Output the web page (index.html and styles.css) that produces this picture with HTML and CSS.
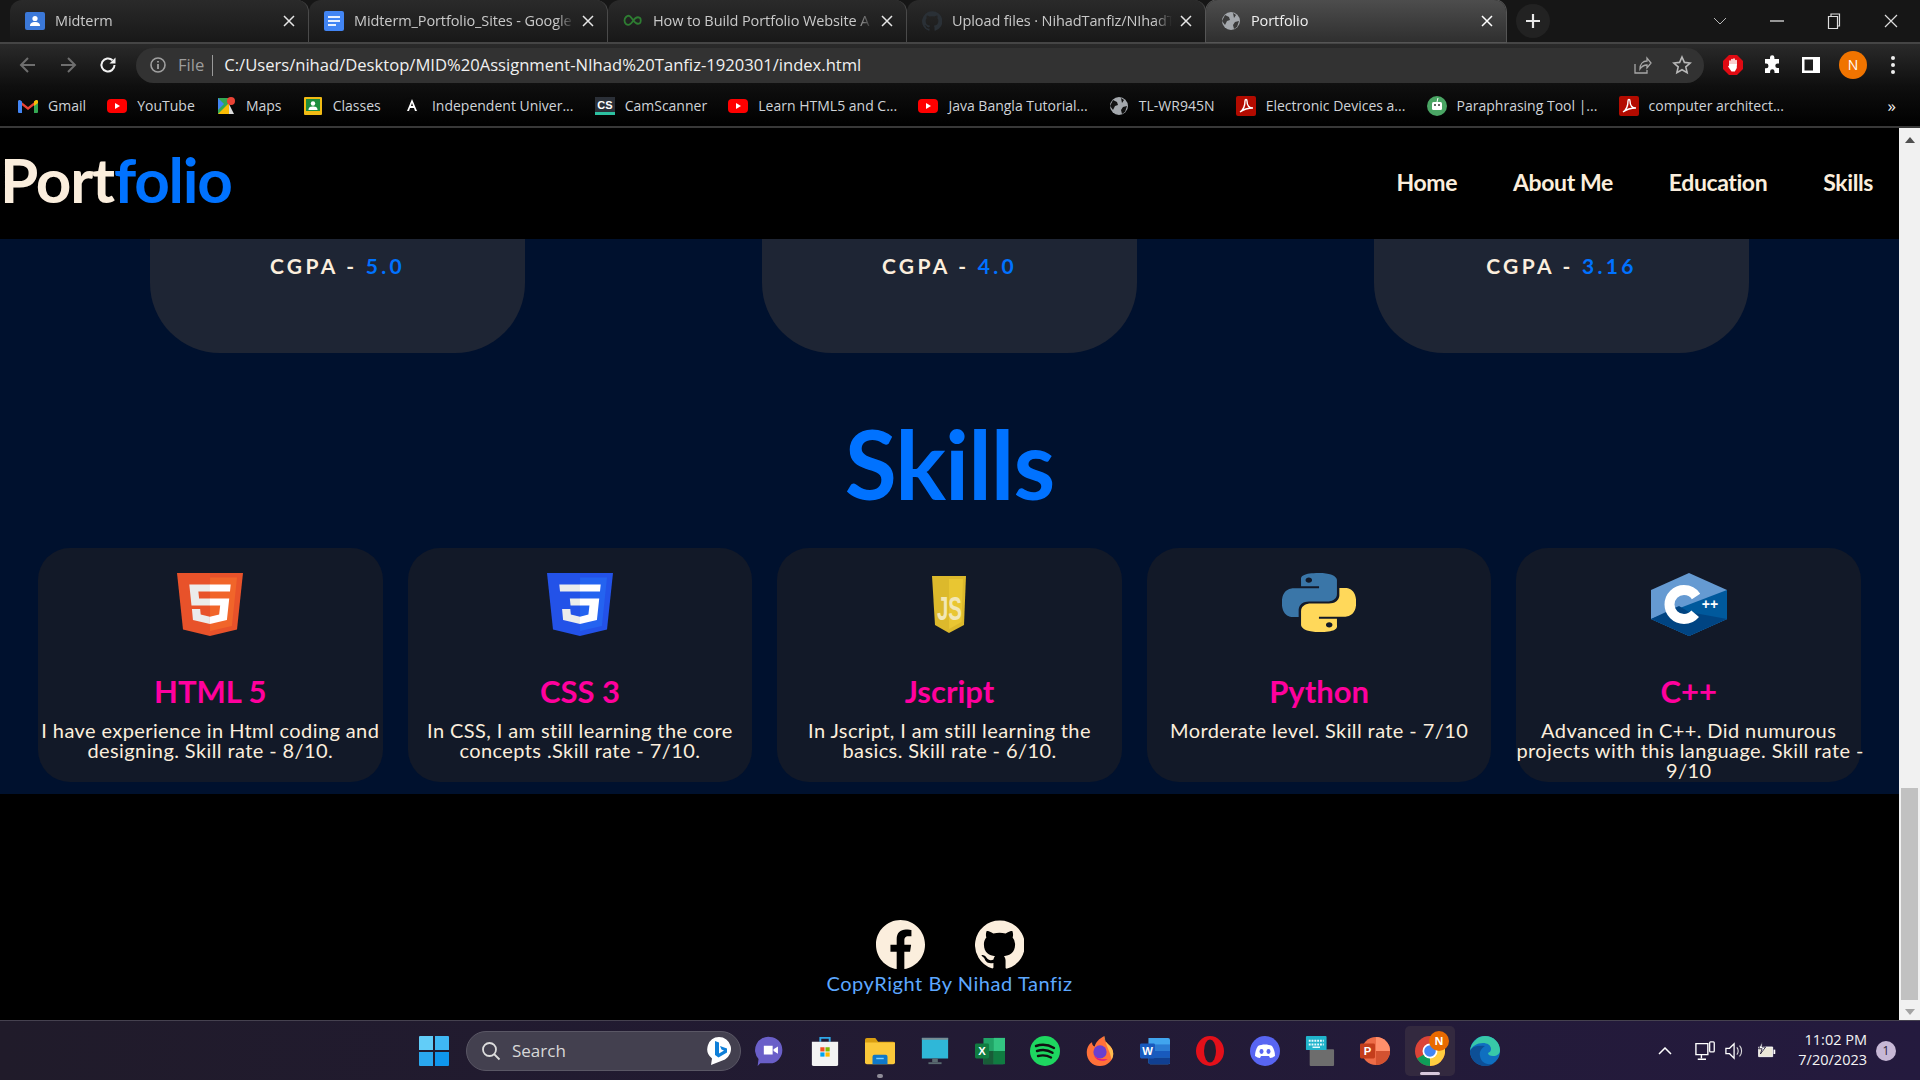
FILE: index.html
```html
<!DOCTYPE html>
<html lang="en">
<head>
<meta charset="utf-8">
<title>Portfolio</title>
<link rel="stylesheet" href="styles.css">
</head>
<body>
<div class="tabstrip">
  <div class="tab">
    <svg class="fav" viewBox="0 0 20 20"><rect x="0" y="1" width="20" height="18" rx="2" fill="#3b78d8"/><circle cx="10" cy="7.500" r="2.600" fill="#fff"/><path d="M5 15c0-3 2-4 5-4s5 1 5 4z" fill="#fff"/></svg>
    <span class="tab-title">Midterm</span><svg class="tab-x" viewBox="0 0 12 12"><path d="M1 1l10 10M11 1L1 11"/></svg>
  </div>
  <div class="tab">
    <svg class="fav" viewBox="0 0 20 20"><rect width="20" height="20" rx="2" fill="#4285f4"/><path d="M4 5h12v2H4zM4 9h12v2H4zM4 13h8v2H4z" fill="#e8f0fe"/></svg>
    <span class="tab-title">Midterm_Portfolio_Sites - Google</span><svg class="tab-x" viewBox="0 0 12 12"><path d="M1 1l10 10M11 1L1 11"/></svg>
  </div>
  <div class="tab">
    <svg class="fav" viewBox="0 0 20 20"><path d="M3 6c3-3 5 0 7 3s4 5 7 3c1-1 1-4 0-5-3-2-5 0-7 3s-4 5-7 3c-2-2-2-5 0-7z" fill="none" stroke="#2e7d32" stroke-width="1.800"/></svg>
    <span class="tab-title">How to Build Portfolio Website A</span><svg class="tab-x" viewBox="0 0 12 12"><path d="M1 1l10 10M11 1L1 11"/></svg>
  </div>
  <div class="tab tab-dim">
    <svg class="fav" viewBox="0 0 24 24"><path fill="#2a3036" d="M12 .3a12 12 0 0 0-3.800 23.380c.6.12.83-.26.83-.57v-2.100c-3.340.72-4.040-1.400-4.040-1.400-.54-1.400-1.330-1.770-1.330-1.770-1.090-.74.08-.73.08-.73 1.200.09 1.840 1.240 1.840 1.240 1.070 1.830 2.800 1.300 3.490 1 .1-.78.42-1.310.76-1.610-2.670-.3-5.470-1.330-5.470-5.930 0-1.310.47-2.380 1.240-3.220-.14-.3-.54-1.520.1-3.180 0 0 1-.32 3.300 1.230a11.500 11.500 0 0 1 6 0c2.280-1.550 3.290-1.230 3.290-1.230.64 1.660.24 2.880.12 3.180a4.650 4.650 0 0 1 1.230 3.220c0 4.610-2.800 5.630-5.480 5.920.42.36.81 1.100.81 2.220v3.290c0 .32.22.7.82.57A12 12 0 0 0 12 .3"/></svg>
    <span class="tab-title">Upload files · NihadTanfiz/NIhadT</span><svg class="tab-x" viewBox="0 0 12 12"><path d="M1 1l10 10M11 1L1 11"/></svg>
  </div>
  <div class="tab tab-active">
    <svg class="fav" viewBox="0 0 20 20"><circle cx="10" cy="10" r="9" fill="#a4a8ad"/><path d="M4 4l4 2 1 3-3 1-2 4-3-4zM12 2l3 2-2 3zM14 11l4-1-2 6-3 2-1-4z" fill="#3a3a3a"/></svg>
    <span class="tab-title">Portfolio</span><svg class="tab-x" viewBox="0 0 12 12"><path d="M1 1l10 10M11 1L1 11"/></svg>
  </div>
  <div class="newtab"><svg class="plus" viewBox="0 0 16 16"><path d="M8 1v14M1 8h14"/></svg></div>
  <div class="winctl">
    <svg class="wc-chev" viewBox="0 0 14 8"><path d="M1 1l6 6 6-6" fill="none" stroke="#b8b8b8" stroke-width="1"/></svg>
    <svg class="wc-min" viewBox="0 0 14 2"><path d="M0 1h14" stroke="#ddd" stroke-width="1.300"/></svg>
    <svg class="wc-max" viewBox="0 0 14 16"><path d="M1.500 3.500h9v12h-9zM4 3.500V1h8.500v12h-2" fill="none" stroke="#ddd" stroke-width="1.200"/></svg>
    <svg class="wc-close" viewBox="0 0 14 14"><path d="M1 1l12 12M13 1L1 13" stroke="#ddd" stroke-width="1.200"/></svg>
  </div>
</div>

<div class="toolbar">
  <svg class="tb-ic" viewBox="0 0 20 20"><path d="M17 10H4M10 3l-7 7 7 7" fill="none" stroke="#6e6e6e" stroke-width="2"/></svg>
  <svg class="tb-ic" viewBox="0 0 20 20"><path d="M3 10h13M10 3l7 7-7 7" fill="none" stroke="#6e6e6e" stroke-width="2"/></svg>
  <svg class="tb-ic" viewBox="0 0 20 20"><path d="M16.500 10a6.500 6.500 0 1 1-2-4.700" fill="none" stroke="#f2f2f2" stroke-width="2"/><path d="M17.500 2.500v6h-6z" fill="#f2f2f2"/></svg>
  <div class="omnibox">
    <svg class="info" viewBox="0 0 16 16"><circle cx="8" cy="8" r="7" fill="none" stroke="#a0a0a0" stroke-width="1.600"/><path d="M8 7v5M8 4v1.600" stroke="#a0a0a0" stroke-width="1.800"/></svg>
    <span class="file">File</span><span class="sep"></span>
    <span class="url">C:/Users/nihad/Desktop/MID%20Assignment-NIhad%20Tanfiz-1920301/index.html</span>
    <svg class="om-ic" viewBox="0 0 20 20"><path d="M3 9v9h12v-3M8 14c0-5 3-8 7-8V3l4 5-4 5v-3c-3 0-5 1-7 4z" fill="none" stroke="#a8a8a8" stroke-width="1.300"/></svg>
    <svg class="om-ic star" viewBox="0 0 20 20"><path d="M10 2l2.400 5.400 5.800.6-4.400 3.900 1.300 5.800L10 14.700l-5.100 3 1.300-5.800L1.800 8l5.800-.6z" fill="none" stroke="#b8b8b8" stroke-width="1.600"/></svg>
  </div>
  <svg class="ext" viewBox="0 0 20 20"><path d="M6 0h8l6 6v8l-6 6H6l-6-6V6z" fill="#e00a12"/><path d="M7 10V6M9 9V4.500M11 9V4M13 10V5.500" stroke="#fff" stroke-width="1.600" stroke-linecap="round"/><path d="M6.200 9h7.600v4l-2 3.500H8.500L5 11.500l1-1z" fill="#fff"/></svg>
  <svg class="ext" viewBox="0 0 20 20"><path d="M8 2.500a2.200 2.200 0 0 1 4.400 0V4H17v4.500h-1.500a2.200 2.200 0 0 0 0 4.400H17V18h-4.500v-1.500a2.200 2.200 0 0 0-4.400 0V18H3v-4.800h1.200a2.300 2.300 0 0 0 0-4.600H3V4h5z" fill="#fff"/></svg>
  <svg class="ext" viewBox="0 0 20 20"><path d="M1 2h18v16H1zM3.500 4.500v11H12v-11z" fill="#fff" fill-rule="evenodd"/></svg>
  <div class="avatar">N</div>
  <svg class="ext menu" viewBox="0 0 6 20"><circle cx="3" cy="3" r="2" fill="#eee"/><circle cx="3" cy="10" r="2" fill="#eee"/><circle cx="3" cy="17" r="2" fill="#eee"/></svg>
</div>

<div class="bookmarks">
  <div class="bm"><svg class="fav" viewBox="0 0 20 16"><path d="M1 2l9 7 9-7v3l-9 7-9-7z" fill="#ea4335"/><path d="M0 3a2 2 0 0 1 2-1l2 1.500V15H1a1 1 0 0 1-1-1z" fill="#4285f4"/><path d="M16 3.500L18 2a2 2 0 0 1 2 1v11a1 1 0 0 1-1 1h-3z" fill="#34a853"/><path d="M16 3.500L18 2a2 2 0 0 1 2 1v2l-4 3z" fill="#fbbc04"/></svg>Gmail</div>
  <div class="bm"><svg class="fav" viewBox="0 0 20 20"><rect y="3" width="20" height="14" rx="4" fill="#f00"/><path d="M8 7l5 3-5 3z" fill="#fff"/></svg>YouTube</div>
  <div class="bm"><svg class="fav" viewBox="0 0 20 20"><path d="M2 2h11v16H2z" fill="#34a853"/><path d="M2 18L13 7v11z" fill="#fbbc04"/><path d="M2 2l6 6-6 6z" fill="#4285f4"/><path d="M13 8l5 10h-5z" fill="#ddd"/><circle cx="15" cy="5" r="4" fill="#ea4335"/></svg>Maps</div>
  <div class="bm"><svg class="fav" viewBox="0 0 20 20"><rect x="1" y="1" width="18" height="18" rx="1" fill="#f1bb14"/><rect x="3" y="3" width="14" height="12" fill="#1e8e3e"/><circle cx="10" cy="7.500" r="2.200" fill="#fff"/><path d="M5.500 14c0-3 2-3.500 4.500-3.500s4.500.5 4.500 3.500z" fill="#fff"/></svg>Classes</div>
  <div class="bm"><svg class="fav" viewBox="0 0 20 20"><path d="M10 1l8 3-2 12-6 3-6-3-2-12z" fill="#0a0a0a"/><path d="M10 3L5 15h2l1-3h4l1 3h2zM9 10l1-3 1 3z" fill="#fff" fill-rule="evenodd"/></svg>Independent Univer...</div>
  <div class="bm"><svg class="fav" viewBox="0 0 20 20"><rect y="1" width="20" height="18" fill="#2b3038"/><rect y="16" width="20" height="3" fill="#2cc0a0"/><text x="10" y="12.500" class="fav-text">CS</text></svg>CamScanner</div>
  <div class="bm"><svg class="fav" viewBox="0 0 20 20"><rect y="3" width="20" height="14" rx="4" fill="#f00"/><path d="M8 7l5 3-5 3z" fill="#fff"/></svg>Learn HTML5 and C...</div>
  <div class="bm"><svg class="fav" viewBox="0 0 20 20"><rect y="3" width="20" height="14" rx="4" fill="#f00"/><path d="M8 7l5 3-5 3z" fill="#fff"/></svg>Java Bangla Tutorial...</div>
  <div class="bm"><svg class="fav" viewBox="0 0 20 20"><circle cx="10" cy="10" r="9" fill="#a4a8ad"/><path d="M4 4l4 2 1 3-3 1-2 4-3-4zM12 2l3 2-2 3zM14 11l4-1-2 6-3 2-1-4z" fill="#111"/></svg>TL-WR945N</div>
  <div class="bm"><svg class="fav" viewBox="0 0 20 20"><rect width="20" height="20" rx="2" fill="#b30b00"/><path d="M4 16c3-2 5-6 5-11 0-2 2-2 2 0 0 4 2 7 6 7-4 0-9 1-13 4z" fill="none" stroke="#fff" stroke-width="1.400"/></svg>Electronic Devices a...</div>
  <div class="bm"><svg class="fav" viewBox="0 0 20 20"><circle cx="10" cy="10" r="10" fill="#4aa564"/><rect x="5" y="6" width="10" height="8" rx="1.500" fill="#fff"/><circle cx="8" cy="9" r="1" fill="#333"/><circle cx="12" cy="9" r="1" fill="#333"/><path d="M10 6l1-4" stroke="#fff"/></svg>Paraphrasing Tool |...</div>
  <div class="bm"><svg class="fav" viewBox="0 0 20 20"><rect width="20" height="20" rx="2" fill="#b30b00"/><path d="M4 16c3-2 5-6 5-11 0-2 2-2 2 0 0 4 2 7 6 7-4 0-9 1-13 4z" fill="none" stroke="#fff" stroke-width="1.400"/></svg>computer architect...</div>
  <div class="bm-more">»</div>
</div>

<div class="viewport">
  <main class="page">
    <header class="site-header">
      <div class="logo">Port<span class="blue">folio</span></div>
      <nav class="nav"><a>Home</a><a>About Me</a><a>Education</a><a>Skills</a></nav>
    </header>
    <section class="content">
      <div class="edu-row">
        <div class="edu-card">CGPA - <span class="blue">5.0</span></div>
        <div class="edu-card">CGPA - <span class="blue">4.0</span></div>
        <div class="edu-card">CGPA - <span class="blue">3.16</span></div>
      </div>
      <h1 class="skills-title">Skills</h1>
      <div class="skills-row">
        <article class="skill">
          <div class="skill-icon"><svg class="ic-html" viewBox="30 0 451 512" preserveAspectRatio="none"><path fill="#e8522a" d="M71 460L30 0h451l-41 460-185 52"/><path fill="#f1652a" d="M256 472l149-41 35-394H256"/><path fill="#ebebeb" d="M256 208h-75l-5-58h80V94H114l15 171h127zm-1 147l-63-17-4-45h-56l7 89 116 32z"/><path fill="#fff" d="M255 208v57h70l-7 73-63 17v59l116-32 16-174zm0-114v56h137l5-56z"/></svg></div>
          <h2>HTML 5</h2>
          <p>I have experience in Html coding and<br>designing. Skill rate - 8/10.</p>
        </article>
        <article class="skill">
          <div class="skill-icon"><svg class="ic-html" viewBox="30 0 451 512" preserveAspectRatio="none"><path fill="#2352e8" d="M71 460L30 0h451l-41 460-185 52"/><path fill="#2463f0" d="M256 472l149-41 35-394H256"/><path fill="#ebebeb" d="M256 94H114l5 56h137zm0 114h-70l5 57h65zm0 147l-63-17-4-45h-56l7 89 116 32z"/><path fill="#fff" d="M255 94v56h137l5-56zm0 114v57h65l-7 73-58 17v59l116-32 16-174z"/></svg></div>
          <h2>CSS 3</h2>
          <p>In CSS, I am still learning the core<br>concepts .Skill rate - 7/10.</p>
        </article>
        <article class="skill">
          <div class="skill-icon"><svg class="ic-js" viewBox="0 0 34 57" preserveAspectRatio="none"><path fill="#dcb92c" d="M0 0h34l-2 49-15 8-14-8z"/><path fill="#e9c632" d="M17 3h14l-1.500 43-12.500 7z"/><text x="5" y="44" class="js-text" textLength="25" lengthAdjust="spacingAndGlyphs">JS</text></svg></div>
          <h2>Jscript</h2>
          <p>In Jscript, I am still learning the<br>basics. Skill rate - 6/10.</p>
        </article>
        <article class="skill">
          <div class="skill-icon"><svg class="ic-py" viewBox="0 0 24 24" preserveAspectRatio="none"><path fill="#3a76a8" d="M14.250.18l.9.2.73.26.59.3.45.32.34.34.25.34.16.33.1.3.04.26.02.2-.01.13V8.500l-.05.63-.13.55-.21.46-.26.38-.3.31-.33.25-.35.19-.35.14-.33.1-.3.07-.26.04-.21.02H8.770l-.69.05-.59.14-.5.22-.41.27-.33.32-.27.35-.2.36-.15.37-.1.35-.07.32-.04.27-.02.21v3.060H3.170l-.21-.03-.28-.07-.32-.12-.35-.18-.36-.26-.36-.36-.35-.46-.32-.59-.28-.73-.21-.88-.14-1.050-.05-1.230.06-1.220.16-1.040.24-.87.32-.71.36-.57.4-.44.42-.33.42-.24.4-.16.36-.1.32-.05.24-.01h.16l.06.01h8.160v-.83H6.180l-.01-2.750-.02-.37.05-.34.11-.31.17-.28.25-.26.31-.23.38-.2.44-.18.51-.15.58-.12.64-.1.71-.06.77-.04.84-.02 1.270.05zm-6.300 1.980l-.23.33-.08.41.08.41.23.34.33.22.41.09.41-.09.33-.22.23-.34.08-.41-.08-.41-.23-.33-.33-.22-.41-.09-.41.09z"/><path fill="#ffd85a" d="M21.040 6.110l.28.06.32.12.35.18.36.27.36.35.35.47.32.59.28.73.21.88.14 1.040.05 1.230-.06 1.230-.16 1.040-.24.86-.32.71-.36.57-.4.45-.42.33-.42.24-.4.16-.36.09-.32.05-.24.02-.16-.01h-8.220v.82h5.840l.01 2.760.02.36-.05.34-.11.31-.17.29-.25.25-.31.24-.38.2-.44.17-.51.15-.58.13-.64.09-.71.07-.77.04-.84.01-1.270-.04-1.070-.14-.9-.2-.73-.25-.59-.3-.45-.33-.34-.34-.25-.34-.16-.33-.1-.3-.04-.25-.02-.2.01-.13v-5.340l.05-.64.13-.54.21-.46.26-.38.3-.32.33-.24.35-.2.35-.14.33-.1.3-.06.26-.04.21-.02.13-.01h5.840l.69-.05.59-.14.5-.21.41-.28.33-.32.27-.35.2-.36.15-.36.1-.35.07-.32.04-.28.02-.21V6.070h2.090l.14.01zm-6.470 14.250l-.23.33-.08.41.08.41.23.33.33.23.41.08.41-.08.33-.23.23-.33.08-.41-.08-.41-.23-.33-.33-.23-.41-.08-.41.08z"/></svg></div>
          <h2>Python</h2>
          <p>Morderate level. Skill rate - 7/10</p>
        </article>
        <article class="skill">
          <div class="skill-icon"><svg class="ic-cpp" viewBox="0 0 76 63" preserveAspectRatio="none"><path fill="#659ad2" d="M38 0l38 17v29L38 63 0 46V17z"/><path fill="#00599c" d="M0 46L76 17v29L38 63z"/><path fill="#004482" d="M38 63L0 46l28-13 10 6 38 7z"/><circle cx="33" cy="31.500" r="14.500" fill="none" stroke="#fff" stroke-width="10" stroke-dasharray="72 19" stroke-dashoffset="-10"/><text x="59" y="36" class="cpp-text">++</text></svg></div>
          <h2>C++</h2>
          <p>Advanced in C++. Did numurous<br>projects with this language. Skill rate -<br>9/10</p>
        </article>
      </div>
    </section>
    <footer class="site-footer">
      <div class="socials">
        <svg class="social" viewBox="0 0 24 24"><path fill="#fbeedd" d="M24 12.070C24 5.410 18.630 0 12 0S0 5.410 0 12.070C0 18.100 4.390 23.100 10.130 24v-8.440H7.080v-3.490h3.050V9.410c0-3.020 1.800-4.700 4.540-4.700 1.310 0 2.680.24 2.680.24v2.970h-1.500c-1.500 0-1.960.93-1.960 1.890v2.260h3.320l-.53 3.500h-2.800V24C19.620 23.100 24 18.100 24 12.070"/></svg>
        <svg class="social" viewBox="0 0 24 24"><path fill="#fbeedd" d="M12 .3a12 12 0 0 0-3.800 23.380c.6.12.83-.26.83-.57v-2.100c-3.340.72-4.040-1.400-4.040-1.400-.54-1.400-1.330-1.770-1.330-1.770-1.090-.74.08-.73.08-.73 1.200.09 1.840 1.240 1.840 1.240 1.070 1.830 2.800 1.300 3.490 1 .1-.78.42-1.310.76-1.610-2.670-.3-5.470-1.330-5.470-5.930 0-1.310.47-2.380 1.240-3.220-.14-.3-.54-1.520.1-3.180 0 0 1-.32 3.300 1.230a11.500 11.500 0 0 1 6 0c2.280-1.550 3.290-1.230 3.290-1.230.64 1.660.24 2.880.12 3.180a4.650 4.650 0 0 1 1.230 3.220c0 4.610-2.800 5.630-5.480 5.920.42.36.81 1.100.81 2.220v3.290c0 .32.22.7.82.57A12 12 0 0 0 12 .3"/></svg>
      </div>
      <div class="copyright">CopyRight By Nihad Tanfiz</div>
    </footer>
  </main>
  <aside class="scrollbar">
    <svg class="sb-arrow" viewBox="0 0 10 6"><path d="M5 0l5 6H0z" fill="#505050"/></svg>
    <div class="sb-track"><div class="sb-thumb"></div></div>
    <svg class="sb-arrow" viewBox="0 0 10 6"><path d="M5 6L0 0h10z" fill="#a3a3a3"/></svg>
  </aside>
</div>

<div class="taskbar">
  <svg class="win" viewBox="0 0 30 30"><path d="M0 1a1 1 0 0 1 1-1h13v14H0z" fill="#62cdf8"/><path d="M16 0h13a1 1 0 0 1 1 1v13H16z" fill="#3fb8f4"/><path d="M0 16h14v14H1a1 1 0 0 1-1-1z" fill="#2aa7ee"/><path d="M16 16h14v13a1 1 0 0 1-1 1H16z" fill="#0f96ec"/></svg>
  <div class="search">
    <svg class="search-ic" viewBox="0 0 20 20"><circle cx="8.500" cy="8.500" r="6.500" fill="none" stroke="#ddd" stroke-width="1.800"/><path d="M13 13l5.500 5.500" stroke="#ddd" stroke-width="1.800"/></svg>
    <span>Search</span>
    <svg class="bing" viewBox="0 0 26 30"><path d="M13 1a12 12 0 0 1 6 22.400L5 29l1-6.500A12 12 0 0 1 13 1z" fill="#fff"/><path d="M9 5l4 1.500v11l5-3-2.500-1-1.500-3.500 7 2.500v4l-8.500 5L9 19z" fill="#0f7fd8"/></svg>
  </div>
  <div class="apps">
    <svg class="app" viewBox="0 0 30 34"><path d="M15 1a14 15 0 0 1 0 30H4l-3 3 1-8A15 15 0 0 1 15 1z" fill="#6a5fc8"/><path d="M8 11h10v10H8zM19 15l5-3v8l-5-3z" fill="#fff"/></svg>
    <svg class="app" viewBox="0 0 30 32"><path d="M10 6V2h10v4" fill="none" stroke="#2fa8e8" stroke-width="2"/><path d="M1 6h28v24a2 2 0 0 1-2 2H3a2 2 0 0 1-2-2z" fill="#f3f3f3"/><path d="M10 12h4.500v4.500H10z" fill="#f25022"/><path d="M15.500 12H20v4.500h-4.500z" fill="#7fba00"/><path d="M10 17.500h4.500V22H10z" fill="#00a4ef"/><path d="M15.500 17.500H20V22h-4.500z" fill="#ffb900"/></svg>
    <div class="app-folder">
      <svg class="app" viewBox="0 0 32 28"><path d="M0 2a2 2 0 0 1 2-2h9l3 4h16a2 2 0 0 1 2 2v4H0z" fill="#d99e10"/><path d="M0 5h32v21a2 2 0 0 1-2 2H2a2 2 0 0 1-2-2z" fill="#fbc83a"/><path d="M8 20a2 2 0 0 1 2-2h12a2 2 0 0 1 2 2v8H8z" fill="#0f78c8"/><path d="M12 22h8" stroke="#7fd0ff" stroke-width="1.500"/></svg>
      <span class="open-dot"></span>
    </div>
    <svg class="app" viewBox="0 0 30 32"><rect x="1" y="2" width="28" height="22" fill="#2fb7d8"/><path d="M1 2h28v2H1z" fill="#7a8a90"/><rect x="12" y="24" width="6" height="4" fill="#5a6a70"/><rect x="8" y="28" width="14" height="2" fill="#5a6a70"/></svg>
    <svg class="app" viewBox="0 0 32 28"><path d="M9 0h21a2 2 0 0 1 2 2v24a2 2 0 0 1-2 2H9z" fill="#21a366"/><path d="M20 0h12v14H20z" fill="#33c481"/><path d="M9 14h11v14H9z" fill="#185c37"/><path d="M20 14h12v14H20z" fill="#107c41"/><rect y="6" width="15" height="16" rx="1.500" fill="#107c41"/><text x="7.500" y="18.500" class="app-text">X</text></svg>
    <svg class="app" viewBox="0 0 30 30"><circle cx="15" cy="15" r="15" fill="#1ed760"/><path d="M6 10c6-2 13-1 18 2M7 15c5-1.500 11-1 15.500 1.800M8 20c4-1 9-.8 13 1.500" fill="none" stroke="#111" stroke-width="2.400" stroke-linecap="round"/></svg>
    <svg class="app" viewBox="0 0 30 34"><path d="M15 34C6 34 0 27 0 19 0 14 2 9 6 7c0 3 1 4 3 5 1-5 5-9 11-12-1 4 1 6 4 9 4 3 6 7 6 11 0 8-7 14-15 14z" fill="#ff7139"/><path d="M20 0c-1 4 1 6 4 9 4 3 6 7 6 11 0 3-1 5-2 7-1-9-6-14-8-27z" fill="#ffbd4f"/><circle cx="15" cy="18" r="7.500" fill="#6a3fd0"/><path d="M8 22c3 6 10 8 16 4-6 1-12 0-16-4z" fill="#e31587"/></svg>
    <svg class="app" viewBox="0 0 32 28"><path d="M9 0h21a2 2 0 0 1 2 2v24a2 2 0 0 1-2 2H11a2 2 0 0 1-2-2z" fill="#41a5ee"/><path d="M9 7h23v7H9z" fill="#2b7cd3"/><path d="M9 14h23v7H9z" fill="#185abd"/><path d="M9 21h23v5a2 2 0 0 1-2 2H11a2 2 0 0 1-2-2z" fill="#103f91"/><rect y="6" width="16" height="16" rx="1.500" fill="#185abd"/><text x="8" y="18.500" class="app-text">W</text></svg>
    <svg class="app" viewBox="0 0 30 30"><ellipse cx="15" cy="15" rx="14" ry="15" fill="#e4101a"/><ellipse cx="15" cy="15" rx="6" ry="11.500" fill="#231c30"/></svg>
    <svg class="app" viewBox="0 0 30 30"><circle cx="15" cy="15" r="15" fill="#5865f2"/><path d="M8 10c4-2 10-2 14 0 2 3 3 6 3 10-2 1-3 2-5 2l-1-2H11l-1 2c-2 0-3-1-5-2 0-4 1-7 3-10z" fill="#fff"/><ellipse cx="11.500" cy="15.500" rx="2" ry="2.400" fill="#5865f2"/><ellipse cx="18.500" cy="15.500" rx="2" ry="2.400" fill="#5865f2"/></svg>
    <svg class="app" viewBox="0 0 30 32"><rect x="4" y="14" width="26" height="18" rx="1" fill="#6d6d6d"/><rect y="0" width="22" height="15" rx="1" fill="#20b4cc"/><path d="M3 5h16M3 9h16" stroke="#e8fbff" stroke-width="2" stroke-dasharray="2 1"/><path d="M7 12h8" stroke="#e8fbff" stroke-width="1.500"/></svg>
    <svg class="app" viewBox="0 0 32 30"><circle cx="17" cy="15" r="15" fill="#ed6c47"/><path d="M17 0a15 15 0 0 1 15 15H17z" fill="#ff8f6b"/><path d="M17 15h15a15 15 0 0 1-15 15z" fill="#d35230"/><rect y="7" width="16" height="16" rx="1.500" fill="#c43e1c"/><text x="8" y="19.500" class="app-text">P</text></svg>
    <div class="app-chrome">
      <svg class="app" viewBox="0 0 30 30"><circle cx="15" cy="15" r="15" fill="#db4437"/><path d="M15 15L2 22.500A15 15 0 0 0 15 30z" fill="#0f9d58"/><path d="M15 15v15A15 15 0 0 0 28 7.500H15z" fill="#ffcd40"/><circle cx="15" cy="15" r="7.500" fill="#fff"/><circle cx="15" cy="15" r="5.800" fill="#4285f4"/></svg>
      <span class="badge">N</span><span class="running"></span>
    </div>
    <svg class="app" viewBox="0 0 30 30"><circle cx="15" cy="15" r="15" fill="#0f6fc0"/><path d="M0 15C1 6 8 0 15 0c9 0 15 7 15 14 0 4-3 6-7 6-3 0-5-1-5-3 2-1 3-2 3-4 0-4-4-6-8-6C7 7 2 10 0 15z" fill="#38c8a8"/><path d="M0 15c0 8 7 15 15 15 4 0 6-1 8-2-6 1-12-1-13-8-1-5 2-8 5-10C8 9 2 10 0 15z" fill="#0d4f96"/></svg>
  </div>
  <div class="tray">
    <svg class="tray-ic chev" viewBox="0 0 14 8"><path d="M1 7l6-6 6 6" fill="none" stroke="#fff" stroke-width="1.500"/></svg>
    <svg class="tray-ic mon" viewBox="0 0 24 22"><path d="M1 3h13v12H1zM7 15v4M3 20h9" fill="none" stroke="#fff" stroke-width="1.500"/><rect x="16" y="1" width="5" height="11" rx="1" fill="none" stroke="#fff" stroke-width="1.400"/></svg>
    <svg class="tray-ic vol" viewBox="0 0 22 20"><path d="M1 7h4l5-5v16l-5-5H1z" fill="none" stroke="#fff" stroke-width="1.400"/><path d="M13 6c2 2 2 6 0 8M16 4c3 3 3 9 0 12" fill="none" stroke="#ddd" stroke-width="1.200"/></svg>
    <svg class="tray-ic bat" viewBox="0 0 24 20"><path d="M3 6h16v11H3z" fill="#ece8d8" stroke="#fff"/><path d="M20 9h2v5h-2z" fill="#fff"/><path d="M7 0L3 8h4l-2 6 6-8H7z" fill="#fff" stroke="#221b38"/></svg>
    <div class="clock"><div>11:02 PM</div><div>7/20/2023</div></div>
    <div class="notif">1</div>
  </div>
</div>
</body>
</html>
```
FILE: styles.css
```css
* { box-sizing: border-box; }
html, body { margin: 0; padding: 0; }
body { width: 1920px; height: 1080px; overflow: hidden; display: flex; flex-direction: column; background: #000; font-family: "Lato", sans-serif; }
h1, h2, p { margin: 0; }

/* browser chrome */
.tabstrip { height: 44px; flex: none; display: flex; align-items: flex-end; background: #161616; border-bottom: 2px solid #454545; padding-left: 10px; }
.tab { width: 299px; height: 42px; flex: none; display: flex; align-items: center; padding: 0 13px 1px 15px; color: #c9c9c9; font: 14.500px "Open Sans", sans-serif; background: linear-gradient(#2a2a2a, #181818); border-radius: 12px 12px 0 0; border-right: 1px solid #4a4a4a; }
.tab .fav { margin-right: 10px; }
.tab-title { flex: 1; min-width: 0; overflow: hidden; white-space: nowrap; letter-spacing: -.1px; -webkit-mask-image: linear-gradient(90deg, #000 92%, transparent); mask-image: linear-gradient(90deg, #000 92%, transparent); }
.tab-x { width: 12px; height: 12px; flex: none; margin-left: 8px; fill: none; stroke: #e6e6e6; stroke-width: 1.500; }
.tab-active { width: 300px; background: linear-gradient(#4d4d4d, #2f2f2f); color: #efefef; border: none; box-shadow: 0 0 0 1px #555; }
.tab-active .tab-x { stroke: #fff; }
.newtab { width: 34px; height: 34px; margin: 0 0 4px 10px; border-radius: 50%; background: #222; display: flex; align-items: center; justify-content: center; flex: none; }
.plus { width: 16px; height: 16px; fill: none; stroke: #e8e8e8; stroke-width: 2.200; }
.winctl { flex: 1; display: flex; align-items: center; align-self: center; justify-content: flex-end; gap: 43px; padding-right: 22px; }
.wc-chev { width: 14px; height: 8px; }
.wc-min { width: 14px; height: 2px; }
.wc-max { width: 14px; height: 16px; }
.wc-close { width: 14px; height: 14px; }

.toolbar { height: 42px; display: flex; align-items: center; background: linear-gradient(#2a2a2a, #0f0f0f); padding-left: 18px; flex: none; }
.tb-ic { width: 20px; height: 20px; margin-right: 20px; flex: none; }
.tb-ic:nth-child(3) { margin-right: 18px; }
.omnibox { width: 1568px; height: 35px; border-radius: 18px; background: #323232; display: flex; align-items: center; padding-left: 14px; color: #fff; flex: none; }
.info { width: 16px; height: 16px; margin-right: 12px; flex: none; }
.file { color: #9c9c9c; font: 16.600px "Open Sans", sans-serif; margin-bottom: 1px; }
.sep { width: 1px; height: 21px; background: #9a9a9a; margin: 0 11px 0 8px; flex: none; }
.url { flex: 1; font: 16.600px "Open Sans", sans-serif; color: #f0f0f0; white-space: nowrap; margin-bottom: 1px; }
.om-ic { width: 20px; height: 20px; margin-right: 20px; flex: none; }
.star { margin-right: 12px; }
.ext { width: 20px; height: 20px; flex: none; margin-left: 19px; }
.avatar { width: 28px; height: 28px; border-radius: 50%; background: #f07400; color: #fff; font: 14px/28px "Open Sans", sans-serif; text-align: center; margin-left: 18px; flex: none; }
.menu { width: 6px; margin-left: 23px; }

.bookmarks { height: 42px; display: flex; align-items: center; gap: 21.200px; padding: 0 0 1px 18px; background: linear-gradient(#0f0f0f, #000); color: #cfd3d8; font: 14px "Open Sans", sans-serif; border-bottom: 2px solid #383838; white-space: nowrap; flex: none; }
.bm { display: flex; align-items: center; gap: 10px; }
.fav { width: 20px; height: 20px; flex: none; }
.fav-text { font: 700 11px "Liberation Sans", sans-serif; fill: #fff; text-anchor: middle; }
.bm-more { margin-left: auto; margin-right: 24px; color: #eee; font-size: 17px; }

/* page */
.viewport { height: 892px; display: flex; flex: none; }
.page { width: 1899px; display: flex; flex-direction: column; background: #000; color: #fbeedd; flex: none; }
.blue { color: #0072ff; }
.site-header { height: 111px; display: flex; align-items: center; justify-content: space-between; padding: 0 26px 0 0; flex: none; }
.logo { font-size: 62px; font-weight: 700; line-height: 1; letter-spacing: -1.200px; margin-top: -10px; }
.nav { display: flex; gap: 56px; font-size: 23px; font-weight: 700; letter-spacing: -.4px; margin-top: -4px; }
.content { height: 555px; background: #00112e; padding: 0 38px; flex: none; }
.edu-row { display: flex; justify-content: space-between; padding: 0 112px; }
.edu-card { width: 375px; height: 114px; background: #1e2534; border-radius: 0 0 70px 70px; text-align: center; padding-top: 14px; font-size: 21px; font-weight: 700; letter-spacing: 3.300px; }
.skills-title { text-align: center; font-size: 95px; font-weight: 700; color: #0072ff; line-height: 95px; letter-spacing: -1px; margin-top: 63px; height: 128px; }
.skills-row { display: flex; gap: 25px; margin-top: 4px; }
.skill { flex: 1; min-width: 0; height: 234px; background: #121928; border-radius: 32px; text-align: center; display: flex; flex-direction: column; }
.skill-icon { height: 125px; padding-top: 25px; display: flex; justify-content: center; align-items: flex-start; }
.ic-html { width: 66px; height: 63px; }
.ic-js { width: 34px; height: 57px; margin-top: 3px; }
.ic-py { width: 74px; height: 59px; }
.ic-cpp { width: 76px; height: 63px; }
.js-text { font: 700 34px "Liberation Sans", sans-serif; fill: #f2e7b6; }
.cpp-text { font: 700 14px "Liberation Sans", sans-serif; fill: #fff; text-anchor: middle; }
.skill h2 { font-size: 31px; font-weight: 700; color: #ff009d; line-height: 36px; }
.skill p { font-size: 20px; line-height: 20px; letter-spacing: .4px; white-space: nowrap; margin-top: 11px; }
.site-footer { flex: 1; display: flex; flex-direction: column; align-items: center; padding-top: 126px; }
.socials { display: flex; gap: 50px; }
.social { width: 49px; height: 49px; }
.copyright { color: #5da8ff; font-size: 20px; letter-spacing: .56px; line-height: 24px; margin-top: 2px; }

.scrollbar { width: 21px; flex: none; background: #f1f1f1; display: flex; flex-direction: column; align-items: center; }
.sb-arrow { width: 10px; height: 6px; margin: 9px 0 7px; flex: none; }
.sb-track { flex: 1; width: 100%; padding: 638px 2px 0; }
.sb-thumb { width: 100%; height: 212px; background: #c1c1c1; }

/* taskbar */
.taskbar { height: 60px; flex: none; display: flex; align-items: center; padding-left: 419px; background: linear-gradient(90deg, #201b2a, #241a3e); border-top: 1px solid #45414f; color: #fff; font-family: "Open Sans", sans-serif; }
.win { width: 30px; height: 30px; flex: none; }
.search { width: 275px; height: 40px; margin-left: 17px; border-radius: 20px; background: #43404f; border: 1px solid #5a5765; display: flex; align-items: center; padding-left: 14px; font-size: 17px; color: #d8d8d8; gap: 11px; flex: none; }
.search-ic { width: 20px; height: 20px; }
.bing { width: 26px; height: 30px; margin-left: auto; margin-right: 8px; }
.apps { display: flex; align-items: center; gap: 25px; margin-left: 14px; }
.app { width: 30px; height: 30px; flex: none; display: block; }
.app-folder { width: 30px; height: 30px; position: relative; }
.open-dot { position: absolute; left: 12px; bottom: -12px; width: 6px; height: 4px; border-radius: 2px; background: #8f8c98; }
.app-text { font: 700 12px "Liberation Sans", sans-serif; fill: #fff; text-anchor: middle; }
.app-chrome { width: 50px; height: 50px; margin: 0 -10px; border-radius: 5px; background: #33293f; display: flex; align-items: center; justify-content: center; position: relative; }
.badge { position: absolute; top: 5px; right: 6px; width: 20px; height: 20px; border-radius: 50%; background: #e86a00; font-size: 11px; font-weight: 700; line-height: 20px; text-align: center; }
.running { position: absolute; bottom: 1px; left: 15px; width: 20px; height: 3px; border-radius: 2px; background: #d8c8dc; }
.tray { margin-left: auto; display: flex; align-items: center; }
.tray-ic { flex: none; }
.chev { width: 14px; height: 8px; margin-right: 23px; }
.mon { width: 22px; height: 22px; margin-right: 8px; }
.vol { width: 20px; height: 20px; margin-right: 11px; }
.bat { width: 21px; height: 19px; margin-right: 21px; }
.clock { font-size: 14.500px; line-height: 20px; text-align: right; color: #f4f4f4; margin-top: -2px; }
.notif { width: 20px; height: 20px; border-radius: 50%; background: #c7b8d6; color: #2a2438; font-size: 12px; line-height: 20px; text-align: center; margin: 0 24px 0 9px; }
```
